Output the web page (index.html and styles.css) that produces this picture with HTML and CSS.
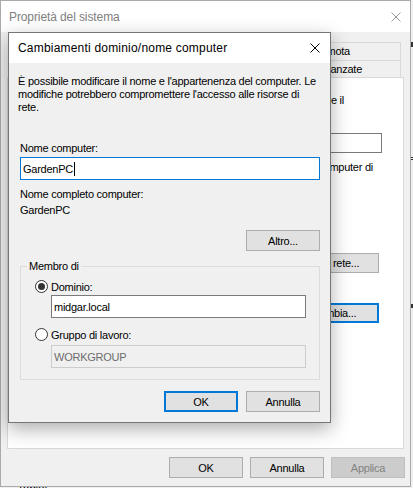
FILE: index.html
```html
<!DOCTYPE html>
<html lang="it">
<head>
<meta charset="utf-8">
<title>Cambiamenti dominio/nome computer</title>
<link rel="stylesheet" href="styles.css">
</head>
<body>
<div class="behind-text">Tablet</div>
<span class="behind-mark m1"></span>
<span class="behind-mark m2"></span>
<span class="behind-mark m3"></span>

<div class="win">
  <div class="win-title">
    <span>Proprietà del sistema</span>
    <svg class="win-close" width="10" height="10" viewBox="0 0 10 10"><path d="M0.5 0.5 L9.5 9.5 M9.5 0.5 L0.5 9.5" stroke="#9a9a9a" stroke-width="1" fill="none"/></svg>
  </div>
  <div class="win-body">
    <div class="tabs">
      <div class="tab-row">
        <div class="tab">Protezione sistema</div>
        <div class="tab t-remote">Connessione remota</div>
      </div>
      <div class="tab-row">
        <div class="tab">Nome computer</div>
        <div class="tab">Hardware</div>
        <div class="tab t-adv">Impostazioni di sistema avanzate</div>
      </div>
    </div>
    <div class="panel">
      <div class="pline p1">Windows utilizza le informazioni seguenti per identificare il</div>
      <div class="pbox"></div>
      <div class="pline p2">Ad esempio: "Computer soggiorno" o "Computer di</div>
      <div class="btn pbtn pb1">ID di rete...</div>
      <div class="btn pbtn pb2 default">Cambia...</div>
    </div>
    <div class="win-buttons">
      <div class="btn">OK</div>
      <div class="btn">Annulla</div>
      <div class="btn disabled">Applica</div>
    </div>
  </div>
</div>

<div class="dialog">
  <div class="dlg-title">
    <span>Cambiamenti dominio/nome computer</span>
    <svg class="dlg-close" width="10" height="10" viewBox="0 0 10 10"><path d="M0.5 0.5 L9.5 9.5 M9.5 0.5 L0.5 9.5" stroke="#000" stroke-width="1" fill="none"/></svg>
  </div>
  <div class="dlg-body">
    <p class="para">È possibile modificare il nome e l'appartenenza del computer. Le modifiche potrebbero compromettere l'accesso alle risorse di rete.</p>
    <div class="lbl l-name">Nome computer:</div>
    <div class="field focus">GardenPC<span class="caret"></span></div>
    <div class="lbl l-full">Nome completo computer:</div>
    <div class="lbl l-fullval">GardenPC</div>
    <div class="btn altro">Altro...</div>
    <fieldset class="group">
      <legend>Membro di</legend>
      <div class="radio-row r1"><span class="radio checked"></span><span>Dominio:</span></div>
      <div class="field sub">midgar.local</div>
      <div class="radio-row r2"><span class="radio"></span><span>Gruppo di lavoro:</span></div>
      <div class="field sub disabled">WORKGROUP</div>
    </fieldset>
    <div class="dlg-buttons">
      <div class="btn default">OK</div>
      <div class="btn">Annulla</div>
    </div>
  </div>
</div>
</body>
</html>
```
FILE: styles.css
```css
* { box-sizing: border-box; }
html, body { margin: 0; padding: 0; }
body {
  width: 413px;
  height: 488px;
  overflow: hidden;
  position: relative;
  background: #f0f0f0;
  font-family: "Liberation Sans", Arial, sans-serif;
  font-size: 11px;
  letter-spacing: -0.25px;
  color: #000;
}

/* fragments of windows lying behind */
.behind-text { position: absolute; left: 17px; top: 482px; font-size: 12px; }
.behind-mark { position: absolute; background: #333; }
.behind-mark.m1 { left: 411px; top: 42px; width: 2px; height: 5px; }
.behind-mark.m2 { left: 411px; top: 157px; width: 2px; height: 1px; box-shadow: 0 2px 0 #333; background: #333; }
.behind-mark.m3 { left: 411px; top: 304px; width: 2px; height: 4px; }

/* buttons */
.btn {
  width: 74px;
  height: 21px;
  flex: none;
  display: flex;
  align-items: center;
  justify-content: center;
  background: #e1e1e1;
  border: 1px solid #adadad;
  white-space: nowrap;
}
.btn.default { border: 2px solid #0078d7; }
.btn.disabled { background: #cccccc; border-color: #bfbfbf; color: #838383; }

/* main window */
.win {
  position: relative;
  z-index: 1;
  width: 411px;
  height: 487px;
  border: 1px solid #aaaaaa;
  background: #f0f0f0;
  display: flex;
  flex-direction: column;
}
.win-title {
  height: 31px;
  flex: none;
  background: #fff;
  display: flex;
  align-items: center;
  justify-content: space-between;
  padding: 0 9px 0 8px;
  font-size: 12px;
  letter-spacing: -0.1px;
  color: #808080;
}
.win-close { display: block; }
.win-body {
  flex: 1;
  padding: 10px 6px 0 6px;
  display: flex;
  flex-direction: column;
}
.tabs { display: flex; flex-direction: column; padding-right: 3px; }
.tab-row { display: flex; justify-content: flex-end; height: 18px; }
.tab-row + .tab-row { height: 17px; }
.tab {
  border: 1px solid #d9d9d9;
  border-bottom: none;
  line-height: 16px;
  padding: 0 8px;
  white-space: nowrap;
}
.tab + .tab { border-left: none; }
.t-remote { padding-right: 50px; }
.t-adv { padding-right: 38px; }

.panel {
  height: 372px;
  flex: none;
  background: #fff;
  border: 1px solid #d9d9d9;
  display: flex;
  flex-direction: column;
  align-items: flex-end;
}
.pline { white-space: nowrap; line-height: 13px; }
.p1 { margin: 16px 59px 0 0; }
.pbox { width: 150px; height: 20px; border: 1px solid #7a7a7a; margin: 26px 21px 0 0; }
.p2 { margin: 8px 30px 0 0; }
.btn.pbtn { width: 90px; height: 20px; margin-right: 24px; }
.btn.pb1 { margin-top: 79px; }
.btn.pb2 { margin-top: 30px; }

.win-buttons {
  display: flex;
  justify-content: flex-end;
  gap: 7px;
  margin: 8px -1px 0 0;
}

/* dialog */
.dialog {
  position: absolute;
  z-index: 2;
  left: 8px;
  top: 32px;
  width: 323px;
  height: 391px;
  border: 1px solid #767676;
  background: #f0f0f0;
  box-shadow: 0 6px 18px rgba(0, 0, 0, 0.32);
  display: flex;
  flex-direction: column;
}
.dlg-title {
  height: 30px;
  flex: none;
  background: #fff;
  display: flex;
  align-items: center;
  justify-content: space-between;
  padding: 0 10px 0 9px;
  font-size: 12px;
  letter-spacing: 0.2px;
}
.dlg-close { display: block; }
.dlg-body {
  padding: 12px 10px 0 11px;
  display: flex;
  flex-direction: column;
}
.para { margin: 0 0 0 -2px; line-height: 13px; }
.lbl { line-height: 13px; }
.l-name { margin-top: 28px; }
.l-full { margin-top: 8px; }
.l-fullval { margin-top: 3px; }

.field {
  height: 23px;
  border: 1px solid #7a7a7a;
  background: #fff;
  display: flex;
  align-items: center;
  padding-left: 2px;
  white-space: nowrap;
}
.field.focus { border-color: #0078d7; margin-top: 2px; }
.caret { display: inline-block; width: 1px; height: 14px; background: #000; margin-left: 1px; }
.btn.altro { align-self: flex-end; margin-top: 13px; }

.group {
  margin: 9px 0 0 0;
  padding: 0 0 11px 0;
  border: 1px solid #dcdcdc;
  min-width: 0;
}
.group legend { margin-left: 6px; padding: 0 2px; line-height: 13px; }
.radio-row { display: flex; align-items: center; gap: 3px; height: 13px; margin-left: 14px; }
.radio-row.r1 { margin-top: 7px; }
.radio-row.r2 { margin-top: 10px; }
.radio {
  width: 13px;
  height: 13px;
  border: 1px solid #333;
  border-radius: 50%;
  background: #fff;
  display: flex;
  align-items: center;
  justify-content: center;
  flex: none;
}
.radio.checked::after {
  content: "";
  width: 7px;
  height: 7px;
  border-radius: 50%;
  background: #333;
}
.field.sub { width: 255px; margin-left: 30px; margin-top: 2px; }
.field.sub.disabled { margin-top: 4px; background: #f0f0f0; border-color: #cccccc; color: #6d6d6d; }

.dlg-buttons {
  display: flex;
  justify-content: flex-end;
  gap: 8px;
  margin-top: 11px;
}
```
